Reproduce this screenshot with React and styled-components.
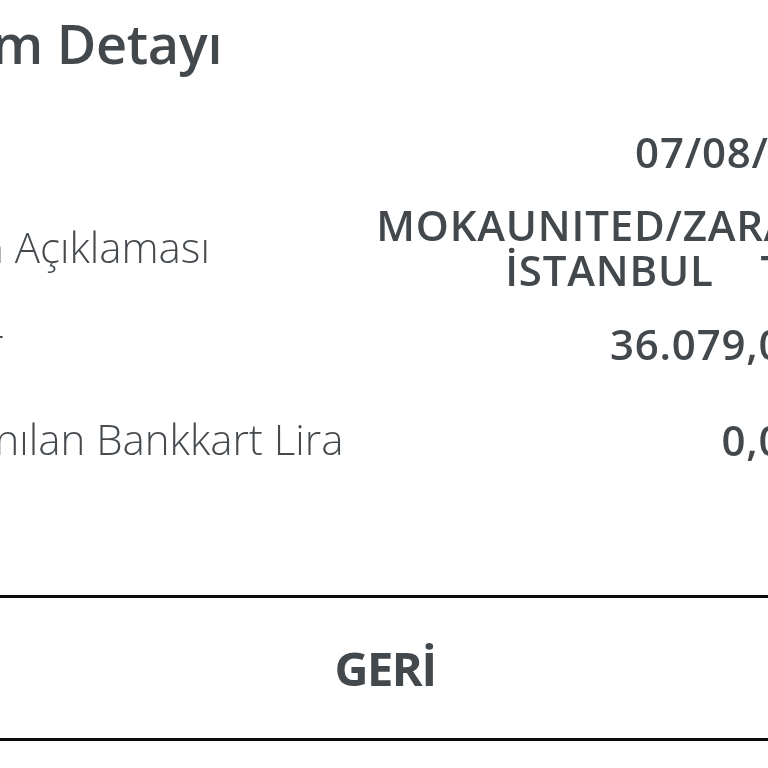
import styled, { createGlobalStyle } from "styled-components";

const GlobalStyle = createGlobalStyle`
  html, body {
    margin: 0;
    padding: 0;
    background: #ffffff;
    overflow: hidden;
  }
  body {
    font-family: "Open Sans", "Liberation Sans", sans-serif;
    color: #464b50;
    -webkit-font-smoothing: antialiased;
  }
`;

const Page = styled.div`
  width: 964px;
  margin-left: -96px;
  display: flex;
  flex-direction: column;
  will-change: transform;
`;

const Header = styled.div`
  height: 103px;
  padding-top: 6px;
  box-sizing: border-box;
`;

const Title = styled.h1`
  margin: 0;
  font-size: 54px;
  line-height: 74px;
  font-weight: 600;
  letter-spacing: -0.3px;
  color: #43484d;
`;

const List = styled.div`
  display: flex;
  flex-direction: column;
`;

const Row = styled.div`
  display: flex;
  justify-content: space-between;
  align-items: center;
  min-height: 96px;
`;

const Label = styled.span`
  font-size: 42px;
  line-height: 46px;
  font-weight: 300;
  color: #454a4f;
  white-space: nowrap;
`;

const Value = styled.span`
  font-size: 42px;
  line-height: 45px;
  font-weight: 600;
  letter-spacing: 0.8px;
  color: #43484d;
  text-align: right;
  white-space: pre;
`;

const BackButton = styled.button`
  margin-top: 108px;
  height: 146px;
  width: 100%;
  background: #ffffff;
  border: none;
  border-top: 3px solid #0a0a0a;
  border-bottom: 3px solid #0a0a0a;
  font-family: "Open Sans", "Liberation Sans", sans-serif;
  font-size: 47px;
  font-weight: 700;
  letter-spacing: -1.5px;
  color: #43484d;
  cursor: pointer;
  padding-right: 8px;
`;

const rows = [
  { label: "Tarih", value: "07/08/2023" },
  { label: "İşlem Açıklaması", value: "MOKAUNITED/ZARA TR \nİSTANBUL    TUR  " },
  { label: "Tutar", value: "36.079,00 TL" },
  { label: "Kullanılan Bankkart Lira", value: "0,00 TL" },
];

export default function App() {
  return (
    <>
      <GlobalStyle />
      <Page>
        <Header>
          <Title>İşlem Detayı</Title>
        </Header>
        <List>
          {rows.map((row) => (
            <Row key={row.label}>
              <Label>{row.label}</Label>
              <Value>{row.value}</Value>
            </Row>
          ))}
        </List>
        <BackButton>GERİ</BackButton>
      </Page>
    </>
  );
}
